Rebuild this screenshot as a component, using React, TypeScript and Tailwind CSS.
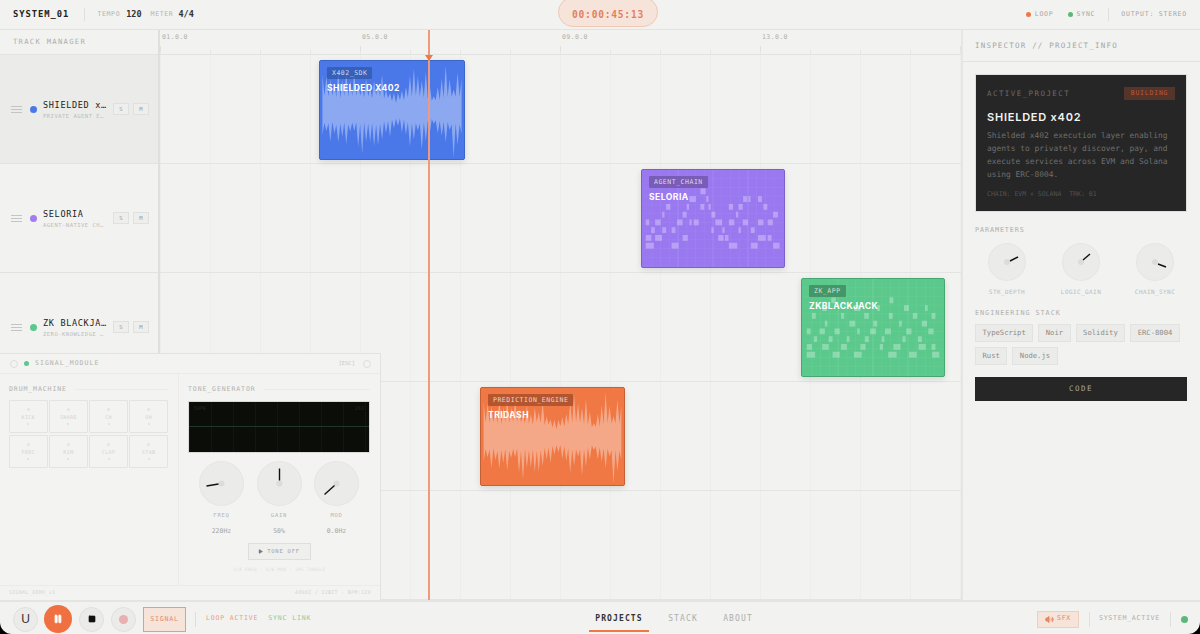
import { Pause, Play, Square, Volume2 } from 'lucide-react';

const TRACKS = [
  { name: 'SHIELDED x…', sub: 'PRIVATE AGENT E…', dot: 'bg-[#4a78e8]', active: true },
  { name: 'SELORIA', sub: 'AGENT-NATIVE CH…', dot: 'bg-[#a07df0]', active: false },
  { name: 'ZK BLACKJA…', sub: 'ZERO-KNOWLEDGE …', dot: 'bg-[#5cc98c]', active: false },
  { name: 'TRIDASH', sub: 'PREDICTION ENG…', dot: 'bg-[#ef7844]', active: false },
  { name: 'MISC', sub: 'UTILITIES', dot: 'bg-[#999]', active: false },
];

const PADS = ['KICK', 'SNARE', 'CH', 'OH', 'PERC', 'RIM', 'CLAP', 'STAB'];
const TAGS = ['TypeScript', 'Noir', 'Solidity', 'ERC-8004', 'Rust', 'Node.js'];

// block rows read off the seloria clip, x ranges in 3x crop pixels
const SELORIA_ROWS = [
  [[210, 226]],
  [[176, 196], [228, 235], [342, 355], [358, 365], [388, 400]],
  [[104, 117], [168, 175], [210, 222], [235, 242], [298, 311], [328, 341], [405, 417]],
  [[92, 99], [155, 167], [244, 256], [320, 327], [435, 450]],
  [[41, 52], [70, 87], [138, 155], [176, 183], [189, 205], [256, 277], [298, 315], [341, 357], [388, 405], [418, 434]],
  [[58, 69], [92, 104], [121, 133], [244, 251], [278, 285], [328, 335], [366, 378]],
  [[41, 58], [70, 91], [155, 171], [265, 282], [286, 297], [388, 412], [418, 430]],
  [[41, 66], [121, 142], [298, 324], [366, 387], [435, 455]],
];

const ZK_ROWS = [
  [[120, 134], [300, 312]],
  [[92, 106], [190, 210], [262, 270], [345, 360], [410, 418]],
  [[60, 72], [150, 160], [222, 236], [298, 310], [372, 386], [430, 442]],
  [[100, 108], [176, 194], [250, 262], [330, 338], [400, 416]],
  [[44, 56], [84, 100], [130, 146], [200, 208], [240, 258], [286, 304], [352, 368], [420, 436]],
  [[66, 76], [112, 124], [168, 176], [224, 236], [276, 284], [340, 350], [388, 400]],
  [[44, 60], [92, 112], [150, 168], [210, 226], [270, 280], [312, 334], [390, 412], [430, 442]],
  [[44, 70], [124, 146], [190, 214], [296, 322], [360, 384], [432, 454]],
];

function rand(seed: number) {
  const x = Math.sin(seed * 127.1) * 43758.5453;
  return x - Math.floor(x);
}

// spiky silhouette, alternating peak and valley points above and below the centre line
function wavePath() {
  const top: string[] = [];
  const bottom: string[] = [];
  const steps = 70;
  for (let i = 0; i <= steps; i++) {
    const t = i / steps;
    const x = 1 + t * 142;
    const dip = Math.min(1, Math.abs(t - 0.53) * 9) * Math.min(1, Math.abs(t - 0.8) * 14);
    const swell = 0.7 + 0.3 * Math.abs(Math.sin(t * 15 + 0.4));
    const peak = i % 2 === 0;
    const up = peak ? 14 + dip * swell * (6 + rand(i + 3) * 30) : 7 + dip * 5 + rand(i + 60) * 3;
    const down = peak ? 14 + dip * swell * (6 + rand(i + 21) * 30) : 7 + dip * 5 + rand(i + 80) * 3;
    top.push(`${x.toFixed(1)} ${(50 - up).toFixed(1)}`);
    bottom.unshift(`${x.toFixed(1)} ${(50 + down).toFixed(1)}`);
  }
  return `M${top.join('L')}L${bottom.join('L')}Z`;
}

const WAVE = wavePath();

function Wave() {
  return (
    <svg viewBox="0 0 144 100" className="absolute inset-0 w-full h-full">
      <path d={WAVE} fill="#ffffff" fillOpacity="0.36" />
    </svg>
  );
}

function Blocks({ rows }: { rows: number[][][] }) {
  const lines = [];
  for (let x = 9; x < 144; x += 9) {
    lines.push(<line key={`v${x}`} x1={x} x2={x} y1="0" y2="100" strokeOpacity={x % 36 === 0 ? 0.12 : 0.05} />);
  }
  for (let y = 9; y < 100; y += 9) {
    lines.push(<line key={`h${y}`} x1="0" x2="144" y1={y} y2={y} strokeOpacity="0.05" />);
  }
  return (
    <svg viewBox="0 0 144 100" className="absolute inset-0 w-full h-full" fill="#ffffff" stroke="#ffffff" strokeWidth="1">
      {lines}
      {rows.map((row, r) =>
        row.map(([a, b]) => (
          <rect
            key={`${r}-${a}`}
            x={a / 3 - 11}
            y={19 + r * 8}
            width={(b - a) / 3}
            height="6"
            stroke="none"
            fillOpacity="0.3"
          />
        )),
      )}
    </svg>
  );
}

function Clip({
  label,
  title,
  className,
  badge,
  children,
}: {
  label: string;
  title: string;
  className: string;
  badge: string;
  children: React.ReactNode;
}) {
  return (
    <div className={`absolute border rounded-[2px] overflow-hidden shadow-[0_2px_6px_rgba(0,0,0,0.12)] ${className}`}>
      {children}
      <div className="relative pt-[6px] pl-[7px]">
        <div className={`w-fit h-[12px] px-[5px] text-[6.5px] leading-[12px] tracking-[0.08em] rounded-[1px] text-white/75 ${badge}`}>
          {label}
        </div>
        <div className="mt-[3px] font-['Inter',sans-serif] font-bold text-[8.6px] leading-[12px] tracking-[0.05em] text-white">
          {title}
        </div>
      </div>
    </div>
  );
}

function Knob({ size, x1, y1, x2, y2 }: { size: number; x1: number; y1: number; x2: number; y2: number }) {
  const c = size / 2;
  return (
    <svg width={size} height={size} viewBox={`0 0 ${size} ${size}`} className="block">
      <circle cx={c} cy={c} r={c - 0.5} fill="#ebebe9" stroke="#e5e5e3" />
      <circle cx={c} cy={c} r="3" fill="#dcdcda" />
      <line x1={c + x1} y1={c + y1} x2={c + x2} y2={c + y2} stroke="#111" strokeWidth="1.4" />
    </svg>
  );
}

function TrackRow({ track }: { track: (typeof TRACKS)[number] }) {
  return (
    <div className={`h-[109px] shrink-0 border-b border-[#e2e2e0] flex items-center pl-[11px] ${track.active ? 'bg-[#ebebe9]' : ''}`}>
      <div className="flex flex-col gap-[2px] w-[11px]">
        <div className="h-px bg-[#c4c4c2]" />
        <div className="h-px bg-[#c4c4c2]" />
        <div className="h-px bg-[#c4c4c2]" />
      </div>
      <div className={`ml-[8px] w-[7px] h-[7px] rounded-full ${track.dot}`} />
      <div className="ml-[6px] w-[70px]">
        <div className="text-[8.5px] leading-[12px] tracking-[0.08em] text-[#222] whitespace-nowrap">{track.name}</div>
        <div className="mt-px text-[5.5px] leading-[8px] tracking-[0.09em] text-[#bdbdbb] whitespace-nowrap">{track.sub}</div>
      </div>
      <div className="flex gap-[4px]">
        <div className="w-[16px] h-[12px] bg-[#eeeeec] border border-[#e0e0de] text-[5.5px] leading-[10px] text-center text-[#999]">S</div>
        <div className="w-[16px] h-[12px] bg-[#eeeeec] border border-[#e0e0de] text-[5.5px] leading-[10px] text-center text-[#999]">M</div>
      </div>
    </div>
  );
}

function SignalModule() {
  return (
    <div className="absolute left-0 top-[323px] w-[381px] h-[247px] bg-[#f3f3f1] border-t border-r border-[#e2e2e0] flex flex-col z-10">
      <div className="h-[20px] shrink-0 border-b border-[#ebebe9] flex items-center pl-[10px] pr-[9px]">
        <div className="w-[8px] h-[8px] rounded-full border border-[#dededc]" />
        <div className="ml-[6px] w-[5px] h-[5px] rounded-full bg-[#5cc98c]" />
        <div className="ml-[6px] text-[6.5px] tracking-[0.16em] text-[#b2b2b0]">SIGNAL_MODULE</div>
        <div className="ml-auto text-[5.5px] text-[#c6c6c4]">[ESC]</div>
        <div className="ml-[8px] w-[8px] h-[8px] rounded-full border border-[#dededc]" />
      </div>
      <div className="flex-1 flex min-h-0">
        <div className="w-[179px] shrink-0 border-r border-[#ebebe9] pl-[9px] pr-[10px] pt-[11px]">
          <div className="flex items-center gap-[8px] text-[6.5px] leading-[8px] tracking-[0.14em] text-[#b2b2b0]">
            DRUM_MACHINE
            <div className="flex-1 h-px bg-[#ebebe9]" />
          </div>
          <div className="mt-[7px] grid grid-cols-4 gap-x-[1.5px] gap-y-[2px]">
            {PADS.map((pad) => (
              <div key={pad} className="h-[33px] border border-[#e3e3e1] rounded-[1px] flex flex-col items-center justify-center">
                <div className="w-[3px] h-[3px] rounded-full bg-[#e4e4e2]" />
                <div className="mt-[2px] text-[5px] leading-[8px] tracking-[0.08em] text-[#d4d4d2]">{pad}</div>
                <div className="mt-[2px] w-[2px] h-[2px] bg-[#e4e4e2]" />
              </div>
            ))}
          </div>
        </div>
        <div className="flex-1 pl-[9px] pr-[10px] pt-[11px] flex flex-col">
          <div className="flex items-center gap-[8px] text-[6.5px] leading-[8px] tracking-[0.14em] text-[#b2b2b0]">
            TONE_GENERATOR
            <div className="flex-1 h-px bg-[#ebebe9]" />
          </div>
          <div className="relative mt-[8px] h-[52px] bg-[#0a0d08] border border-[#d9d9d7] bg-[linear-gradient(to_right,#121611_1px,transparent_1px)] bg-[size:22px_100%]">
            <div className="absolute left-0 right-0 top-[24px] h-px bg-[#22352a]" />
            <div className="absolute left-[5px] top-[3px] text-[5px] leading-[6px] text-[#242a22]">50PK</div>
            <div className="absolute right-[5px] top-[3px] text-[5px] leading-[6px] text-[#242a22]">2X3</div>
          </div>
          <div className="mt-[8px] flex justify-between pl-[11px] pr-[11px]">
            {[
              { label: 'FREQ', value: '220Hz', x1: -15, y1: 2.5, x2: -3, y2: 0.5 },
              { label: 'GAIN', value: '50%', x1: 0, y1: -15, x2: 0, y2: -3 },
              { label: 'MOD', value: '0.0Hz', x1: -12, y1: 11, x2: -2, y2: 2 },
            ].map((k) => (
              <div key={k.label} className="w-[45px] flex flex-col items-center">
                <Knob size={45} x1={k.x1} y1={k.y1} x2={k.x2} y2={k.y2} />
                <div className="mt-[5px] text-[5.5px] leading-[8px] tracking-[0.14em] text-[#b5b5b3]">{k.label}</div>
                <div className="mt-[8px] text-[6.5px] leading-[8px] text-[#a6a6a4]">{k.value}</div>
              </div>
            ))}
          </div>
          <div className="mt-[8px] mx-auto w-[63px] h-[17px] border border-[#dededc] bg-[#efefed] flex items-center justify-center gap-[4px] text-[5.5px] tracking-[0.14em] text-[#a0a0a0]">
            <Play size={5} fill="#777" stroke="#777" />
            TONE OFF
          </div>
          <div className="mt-[7px] text-center text-[4.5px] leading-[6px] tracking-[0.06em] text-[#dddddb]">
            3/4 FREQ · 5/6 MOD · SPC TOGGLE
          </div>
        </div>
      </div>
      <div className="h-[15px] shrink-0 border-t border-[#ebebe9] flex items-center justify-between px-[9px] text-[5px] tracking-[0.06em] text-[#d6d6d4]">
        <span>SIGNAL_DEMO_v1</span>
        <span>48KHZ / 32BIT · BPM:120</span>
      </div>
    </div>
  );
}

function Inspector() {
  return (
    <aside className="w-[239px] shrink-0 border-l-2 border-[#e6e6e4] flex flex-col">
      <div className="h-[32px] shrink-0 border-b border-[#e2e2e0] pl-[12px] flex items-center text-[7.5px] tracking-[0.16em] text-[#a6a6a4]">
        INSPECTOR // PROJECT_INFO
      </div>
      <div className="pl-[12px] pr-[13px] pt-[12px]">
        <div className="h-[138px] bg-[#262626] border border-[#dededc] pl-[11px] pr-[11px] pt-[12px]">
          <div className="flex items-center justify-between">
            <span className="text-[7.5px] tracking-[0.19em] text-[#6a6a68]">ACTIVE_PROJECT</span>
            <span className="h-[13px] w-[51px] bg-[#55342a] text-center text-[6.5px] leading-[13px] tracking-[0.12em] text-[#b85a3c]">BUILDING</span>
          </div>
          <div className="mt-[10px] font-['Inter',sans-serif] font-semibold text-[11px] leading-[14px] tracking-[0.07em] text-[#f2f2f0]">
            SHIELDED x402
          </div>
          <p className="mt-[5px] w-[186px] text-[7.9px] leading-[13px] text-[#6f6f6d]">
            Shielded x402 execution layer enabling agents to privately discover, pay, and execute services across EVM and Solana using ERC-8004.
          </p>
          <div className="mt-[9px] text-[6.5px] leading-[8px] whitespace-pre text-[#525250]">CHAIN: EVM + SOLANA  TRK: 01</div>
        </div>
        <div className="mt-[14px] text-[6.8px] leading-[8px] tracking-[0.13em] text-[#b0b0ae]">PARAMETERS</div>
        <div className="mt-[9px] flex justify-between pl-[13px] pr-[13px]">
          {[
            { label: 'STK_DEPTH', x1: 3, y1: -1, x2: 11, y2: -5 },
            { label: 'LOGIC_GAIN', x1: 2, y1: -2, x2: 9, y2: -8 },
            { label: 'CHAIN_SYNC', x1: 3, y1: 2, x2: 11, y2: 5 },
          ].map((k) => (
            <div key={k.label} className="w-[38px] flex flex-col items-center">
              <Knob size={38} x1={k.x1} y1={k.y1} x2={k.x2} y2={k.y2} />
              <div className="mt-[7px] text-[6px] leading-[8px] tracking-[0.07em] whitespace-nowrap text-[#bcbcba]">{k.label}</div>
            </div>
          ))}
        </div>
        <div className="mt-[13px] text-[6.8px] leading-[8px] tracking-[0.14em] text-[#b0b0ae]">ENGINEERING STACK</div>
        <div className="mt-[7px] flex flex-wrap gap-x-[5px] gap-y-[5px] w-[212px]">
          {TAGS.map((tag) => (
            <div key={tag} className="h-[18px] px-[6.5px] bg-[#ebebe9] border border-[#e2e2e0] text-[7.2px] leading-[16px] text-[#8c8c8a]">
              {tag}
            </div>
          ))}
        </div>
        <div className="mt-[12px] h-[24px] bg-[#262626] text-center text-[7.5px] leading-[24px] tracking-[0.2em] text-[#a8a8a6]">
          CODE
        </div>
      </div>
    </aside>
  );
}

function Timeline() {
  return (
    <div className="relative flex-1 min-w-0 flex flex-col">
      <div className="relative h-[25px] shrink-0 border-b border-[#e2e2e0]">
        {['01.0.0', '05.0.0', '09.0.0', '13.0.0'].map((t, i) => (
          <span key={t} className={`absolute top-[3px] text-[6.5px] leading-[9px] tracking-[0.06em] text-[#b0b0ae] ${['left-[2px]', 'left-[202px]', 'left-[402px]', 'left-[602px]'][i]}`}>
            {t}
          </span>
        ))}
        <div className="absolute left-0 right-0 bottom-0 h-[8px] bg-[linear-gradient(to_right,#e0e0de_1px,transparent_1px)] bg-[size:200px_100%]" />
        <div className="absolute left-0 right-0 bottom-0 h-[4px] bg-[linear-gradient(to_right,#e6e6e4_1px,transparent_1px)] bg-[size:50px_100%]" />
      </div>
      <div className="flex-1 flex flex-col bg-[linear-gradient(to_right,#ededeb_1px,transparent_1px)] bg-[size:50px_100%]">
        {TRACKS.map((t) => (
          <div key={t.name} className="h-[109px] shrink-0 border-b border-[#e4e4e2]" />
        ))}
      </div>

      <Clip label="X402_SDK" title="SHIELDED X402" className="left-[159px] top-[30px] w-[146px] h-[100px] bg-[#4a78e8] border-[#3a66c8]" badge="bg-[#2f55a8]/70">
        <Wave />
      </Clip>
      <Clip label="AGENT_CHAIN" title="SELORIA" className="left-[481px] top-[139px] w-[144px] h-[99px] bg-[#9a78f0] border-[#7d5fcc]" badge="bg-[#6f55a8]/80">
        <Blocks rows={SELORIA_ROWS} />
      </Clip>
      <Clip label="ZK_APP" title="ZKBLACKJACK" className="left-[641px] top-[248px] w-[144px] h-[99px] bg-[#5cc98c] border-[#45a872]" badge="bg-[#3d8a5e]/80">
        <Blocks rows={ZK_ROWS} />
      </Clip>
      <Clip label="PREDICTION_ENGINE" title="TRIDASH" className="left-[320px] top-[357px] w-[145px] h-[99px] bg-[#ef7844] border-[#c75f34]" badge="bg-[#a8502c]/85">
        <Wave />
      </Clip>

      <div className="absolute left-[268px] top-0 bottom-0 w-[2px] bg-[#ef9a7c] z-[5]" />
      <div className="absolute left-[265px] top-[25px] w-0 h-0 border-l-[4px] border-r-[4px] border-t-[6px] border-l-transparent border-r-transparent border-t-[#ef7844] z-[5]" />
    </div>
  );
}

export default function App() {
  return (
    <div className="w-[1200px] h-[634px] bg-black overflow-hidden">
      <div className="relative w-full h-full flex flex-col rounded-b-[12px] overflow-hidden bg-[#f2f2f0] font-['DejaVu_Sans_Mono',monospace]">
        <header className="h-[30px] shrink-0 border-b border-[#e2e2e0] flex items-center pl-[13px] pr-[13px]">
          <span className="text-[8.8px] font-bold tracking-[0.11em] text-[#222]">SYSTEM_01</span>
          <div className="ml-[15px] h-[13px] w-px bg-[#e0e0de]" />
          <span className="ml-[12px] text-[6.5px] tracking-[0.1em] text-[#b4b4b2]">TEMPO</span>
          <span className="ml-[6px] text-[8.5px] font-bold text-[#333]">120</span>
          <span className="ml-[9px] text-[6.5px] tracking-[0.1em] text-[#b4b4b2]">METER</span>
          <span className="ml-[5px] text-[8.5px] font-bold text-[#333]">4/4</span>
          <div className="ml-auto flex items-center">
            <div className="w-[5px] h-[5px] rounded-full bg-[#ef7844]" />
            <span className="ml-[4px] text-[6.5px] tracking-[0.12em] text-[#a6a6a4]">LOOP</span>
            <div className="ml-[14px] w-[5px] h-[5px] rounded-full bg-[#5cb878]" />
            <span className="ml-[4px] text-[6.5px] tracking-[0.12em] text-[#a6a6a4]">SYNC</span>
            <div className="ml-[13px] h-[13px] w-px bg-[#e0e0de]" />
            <span className="ml-[12px] text-[6.5px] tracking-[0.12em] text-[#a6a6a4]">OUTPUT: STEREO</span>
          </div>
        </header>
        <div className="absolute left-[558px] -top-[3px] w-[100px] h-[30px] rounded-full bg-[#f6e4db] border border-[#efc9b6] flex items-center justify-center pt-[6px] text-[9.6px] font-bold tracking-[0.08em] text-[#e37f5e] z-20">
          00:00:45:13
        </div>

        <main className="relative flex-1 min-h-0 flex">
          <div className="w-[160px] shrink-0 border-r-2 border-[#dfdfdd] flex flex-col">
            <div className="h-[25px] shrink-0 border-b border-[#e2e2e0] pl-[13px] flex items-center text-[7.2px] tracking-[0.18em] text-[#aeaeac]">
              TRACK MANAGER
            </div>
            {TRACKS.map((t) => (
              <TrackRow key={t.name} track={t} />
            ))}
          </div>
          <Timeline />
          <Inspector />
          <SignalModule />
        </main>

        <footer className="h-[34px] shrink-0 border-t-2 border-[#e4e4e2] flex items-center pl-[13px] pr-[12px] pt-[2px] relative">
          <div className="w-[25px] h-[25px] rounded-full bg-[#ebebe9] border border-[#dfdfdd] flex items-center justify-center text-[12px] text-[#333] font-['Liberation_Sans',sans-serif]">U</div>
          <div className="ml-[6px] w-[28px] h-[28px] rounded-full bg-[#ef7040] flex items-center justify-center">
            <Pause size={10} fill="#fff" stroke="#fff" />
          </div>
          <div className="ml-[7px] w-[25px] h-[25px] rounded-full bg-[#ebebe9] border border-[#dfdfdd] flex items-center justify-center">
            <Square size={8} fill="#111" stroke="#111" />
          </div>
          <div className="ml-[7px] w-[25px] h-[25px] rounded-full bg-[#ebebe9] border border-[#dfdfdd] flex items-center justify-center">
            <div className="w-[9px] h-[9px] rounded-full bg-[#e8b0b0]" />
          </div>
          <div className="ml-[7px] w-[43px] h-[25px] bg-[#f6e4db] border-[1.5px] border-[#ec9a7c] text-center text-[6.6px] leading-[22px] tracking-[0.12em] text-[#e08a6a]">SIGNAL</div>
          <div className="ml-[9px] h-[15px] w-px bg-[#dededc]" />
          <span className="ml-[10px] text-[6.5px] tracking-[0.13em] text-[#ec9a7c]">LOOP ACTIVE</span>
          <span className="ml-[10px] text-[6.5px] tracking-[0.13em] text-[#8ccaa0]">SYNC LINK</span>

          <nav className="absolute left-[589px] top-0 bottom-0 flex pt-[2px]">
            <div className="relative w-[60px] flex items-center justify-center text-[8px] font-bold tracking-[0.14em] text-[#333]">
              PROJECTS
              <div className="absolute left-0 right-0 bottom-[2px] h-[2px] bg-[#ef7844]" />
            </div>
            <div className="ml-[18px] w-[32px] flex items-center justify-center text-[8px] tracking-[0.14em] text-[#aeaeac]">STACK</div>
            <div className="ml-[23px] w-[32px] flex items-center justify-center text-[8px] tracking-[0.14em] text-[#aeaeac]">ABOUT</div>
          </nav>

          <div className="ml-auto flex items-center">
            <div className="w-[42px] h-[17px] bg-[#f6e4db] border border-[#f0cdbc] flex items-center justify-center gap-[3px] text-[6.6px] tracking-[0.1em] text-[#e08a6a]">
              <Volume2 size={9} fill="#e08a6a" stroke="#e08a6a" />
              SFX
            </div>
            <div className="ml-[10px] h-[15px] w-px bg-[#e0e0de]" />
            <span className="ml-[9px] text-[6.6px] tracking-[0.11em] text-[#aeaeac]">SYSTEM_ACTIVE</span>
            <div className="ml-[10px] h-[15px] w-px bg-[#e0e0de]" />
            <div className="ml-[10px] w-[7px] h-[7px] rounded-full bg-[#5cb878]" />
          </div>
        </footer>
      </div>
    </div>
  );
}
